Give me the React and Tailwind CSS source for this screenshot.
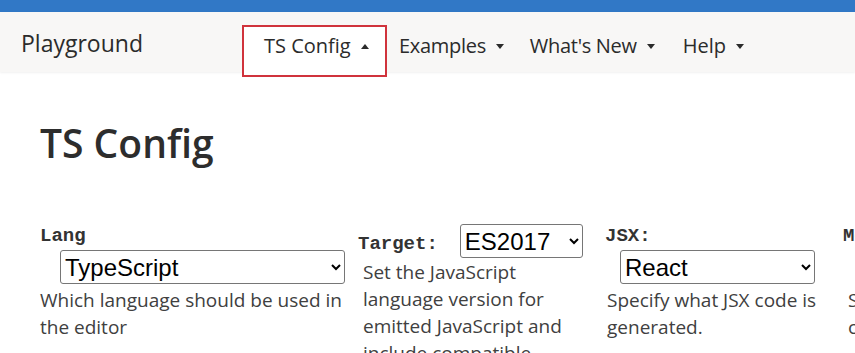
import React from "react";

const sans = "font-['Open_Sans',sans-serif]";
const mono = "font-['Liberation_Mono',monospace]";
const selectCls =
  "h-[34px] border border-[#767676] rounded-[3px] bg-white text-black text-[24px] leading-[30px] font-['Liberation_Sans',sans-serif]";

function Caret({ up }) {
  return (
    <svg width="8" height="5" viewBox="0 0 8 5" className="ml-[10px]">
      {up ? <path d="M0 5 L4 0 L8 5 Z" fill="#2b2b2b" /> : <path d="M0 0 L4 5 L8 0 Z" fill="#2b2b2b" />}
    </svg>
  );
}

function NavItem({ label, className }) {
  return (
    <div className={"flex items-center h-[28px] " + className}>
      <span>{label}</span>
      <Caret />
    </div>
  );
}

export default function App() {
  return (
    <div className={"w-[855px] h-[353px] overflow-hidden bg-white text-[#2b2b2b] " + sans}>
      {/* top stripe */}
      <div className="h-[12px] bg-[#3178c6]" />

      {/* nav */}
      <nav className="relative h-[60px] bg-[#f8f7f6] shadow-[0_1px_2px_rgba(0,0,0,0.06)] flex items-start text-[20px]">
        <div className="ml-[21px] w-[221px] shrink-0 mt-[16px] h-[30px] flex items-center text-[23px]">Playground</div>
        <div className="mt-[13px] h-[52px] w-[145px] shrink-0 border-2 border-[#d0333c] bg-white pl-[20px] pt-[5px]">
          <div className="flex items-center h-[28px]">
            <span>TS Config</span>
            <Caret up />
          </div>
        </div>
        <NavItem label="Examples" className="ml-[12px] mt-[20px] tracking-[-0.3px]" />
        <NavItem label="What's New" className="ml-[26px] mt-[20px] tracking-[-0.3px]" />
        <NavItem label="Help" className="ml-[28px] mt-[20px]" />
      </nav>

      {/* heading */}
      <h1 className="ml-[40px] mt-[47px] text-[39px] leading-[48px] font-semibold text-[#2d2d2d]">TS Config</h1>

      {/* options */}
      <div className="ml-[40px] mt-[56px] flex items-start text-[19px] leading-[27px] text-[#404040]">
        <div className="w-[318px] shrink-0">
          <div className={"h-[27px] text-[19px] font-bold text-[#333] " + mono}>Lang</div>
          <select className={"ml-[20px] block w-[285px] " + selectCls}>
            <option>TypeScript</option>
          </select>
          <p className="mt-[3px] w-[310px]">Which language should be used in the editor</p>
        </div>

        <div className="w-[247px] shrink-0">
          <div className="flex items-center h-[36px]">
            <span className={"text-[19px] font-bold text-[#333] pt-[6px] " + mono}>Target:</span>
            <select className={"ml-[22px] w-[123px] " + selectCls}>
              <option>ES2017</option>
            </select>
          </div>
          <p className="w-[230px] pl-[5px]">
            Set the JavaScript language version for emitted JavaScript and include compatible library declarations.
          </p>
        </div>

        <div className="w-[238px] shrink-0">
          <div className={"h-[27px] text-[19px] font-bold text-[#333] " + mono}>JSX:</div>
          <select className={"ml-[15px] block w-[195px] " + selectCls}>
            <option>React</option>
          </select>
          <p className="mt-[3px] w-[225px] pl-[2px]">Specify what JSX code is generated.</p>
        </div>

        <div className="w-[240px] shrink-0">
          <div className={"h-[27px] text-[19px] font-bold text-[#333] " + mono}>Module:</div>
          <select className={"ml-[20px] block w-[195px] " + selectCls}>
            <option>ESNext</option>
          </select>
          <p className="mt-[3px] w-[225px] pl-[5px]">Specify what module code is generated.</p>
        </div>
      </div>
    </div>
  );
}
